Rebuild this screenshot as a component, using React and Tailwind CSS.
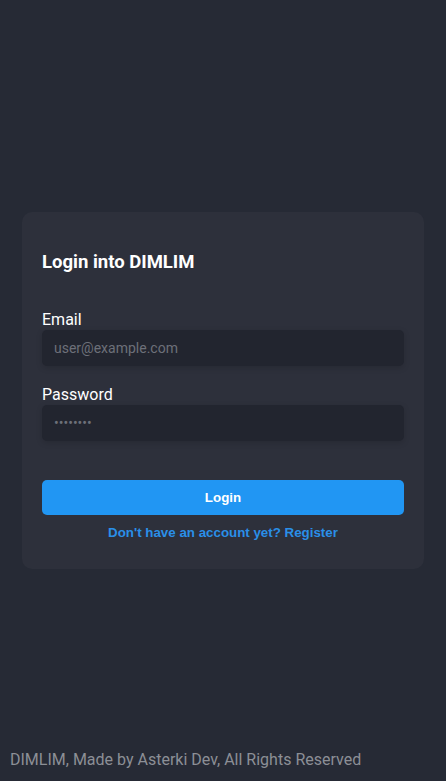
import React from 'react';

const App = () => {
  return (
    <div className="relative min-h-screen bg-[#262a35] font-['Roboto',sans-serif]">
      <main className="flex h-screen items-center justify-center px-[22px]">
        <div className="w-full rounded-[10px] bg-[#2d303b] px-5 pt-[37px] pb-[28px]">
          <h3 className="text-[18.5px] font-bold leading-[27px] text-white">Login into DIMLIM</h3>

          <form className="mt-[34px]" onSubmit={(e) => e.preventDefault()}>
            <label className="block text-[16px] leading-[20px] text-white">Email</label>
            <input
              type="email"
              placeholder="user@example.com"
              className="block h-9 w-full rounded-[5px] bg-[#22252f] px-3 text-[14px] text-white placeholder-[#6d7079] shadow-[0_2px_6px_rgba(0,0,0,0.15)] outline-none"
            />

            <label className="mt-[19px] block text-[16px] leading-[20px] text-white">Password</label>
            <input
              type="password"
              placeholder="••••••••"
              className="block h-9 w-full rounded-[5px] bg-[#22252f] px-3 text-[14px] text-white placeholder-[#6d7079] shadow-[0_2px_6px_rgba(0,0,0,0.15)] outline-none"
            />

            <button
              type="submit"
              className="mt-[39px] block h-[35px] w-full rounded-[5px] bg-[#2196f3] font-['Liberation_Sans',Arial,sans-serif] text-[13.33px] font-bold text-white"
            >
              Login
            </button>
          </form>

          <button className="mt-[10px] block w-full text-center font-['Liberation_Sans',Arial,sans-serif] text-[13.33px] font-bold leading-4 text-[#2a8fe8]">
            Don't have an account yet? Register
          </button>
        </div>
      </main>

      <footer className="absolute bottom-0 left-0 px-[10px] pb-[9px] text-[16px] leading-6 text-[#8c8f96]">
        DIMLIM, Made by Asterki Dev, All Rights Reserved
      </footer>
    </div>
  );
};

export default App;
